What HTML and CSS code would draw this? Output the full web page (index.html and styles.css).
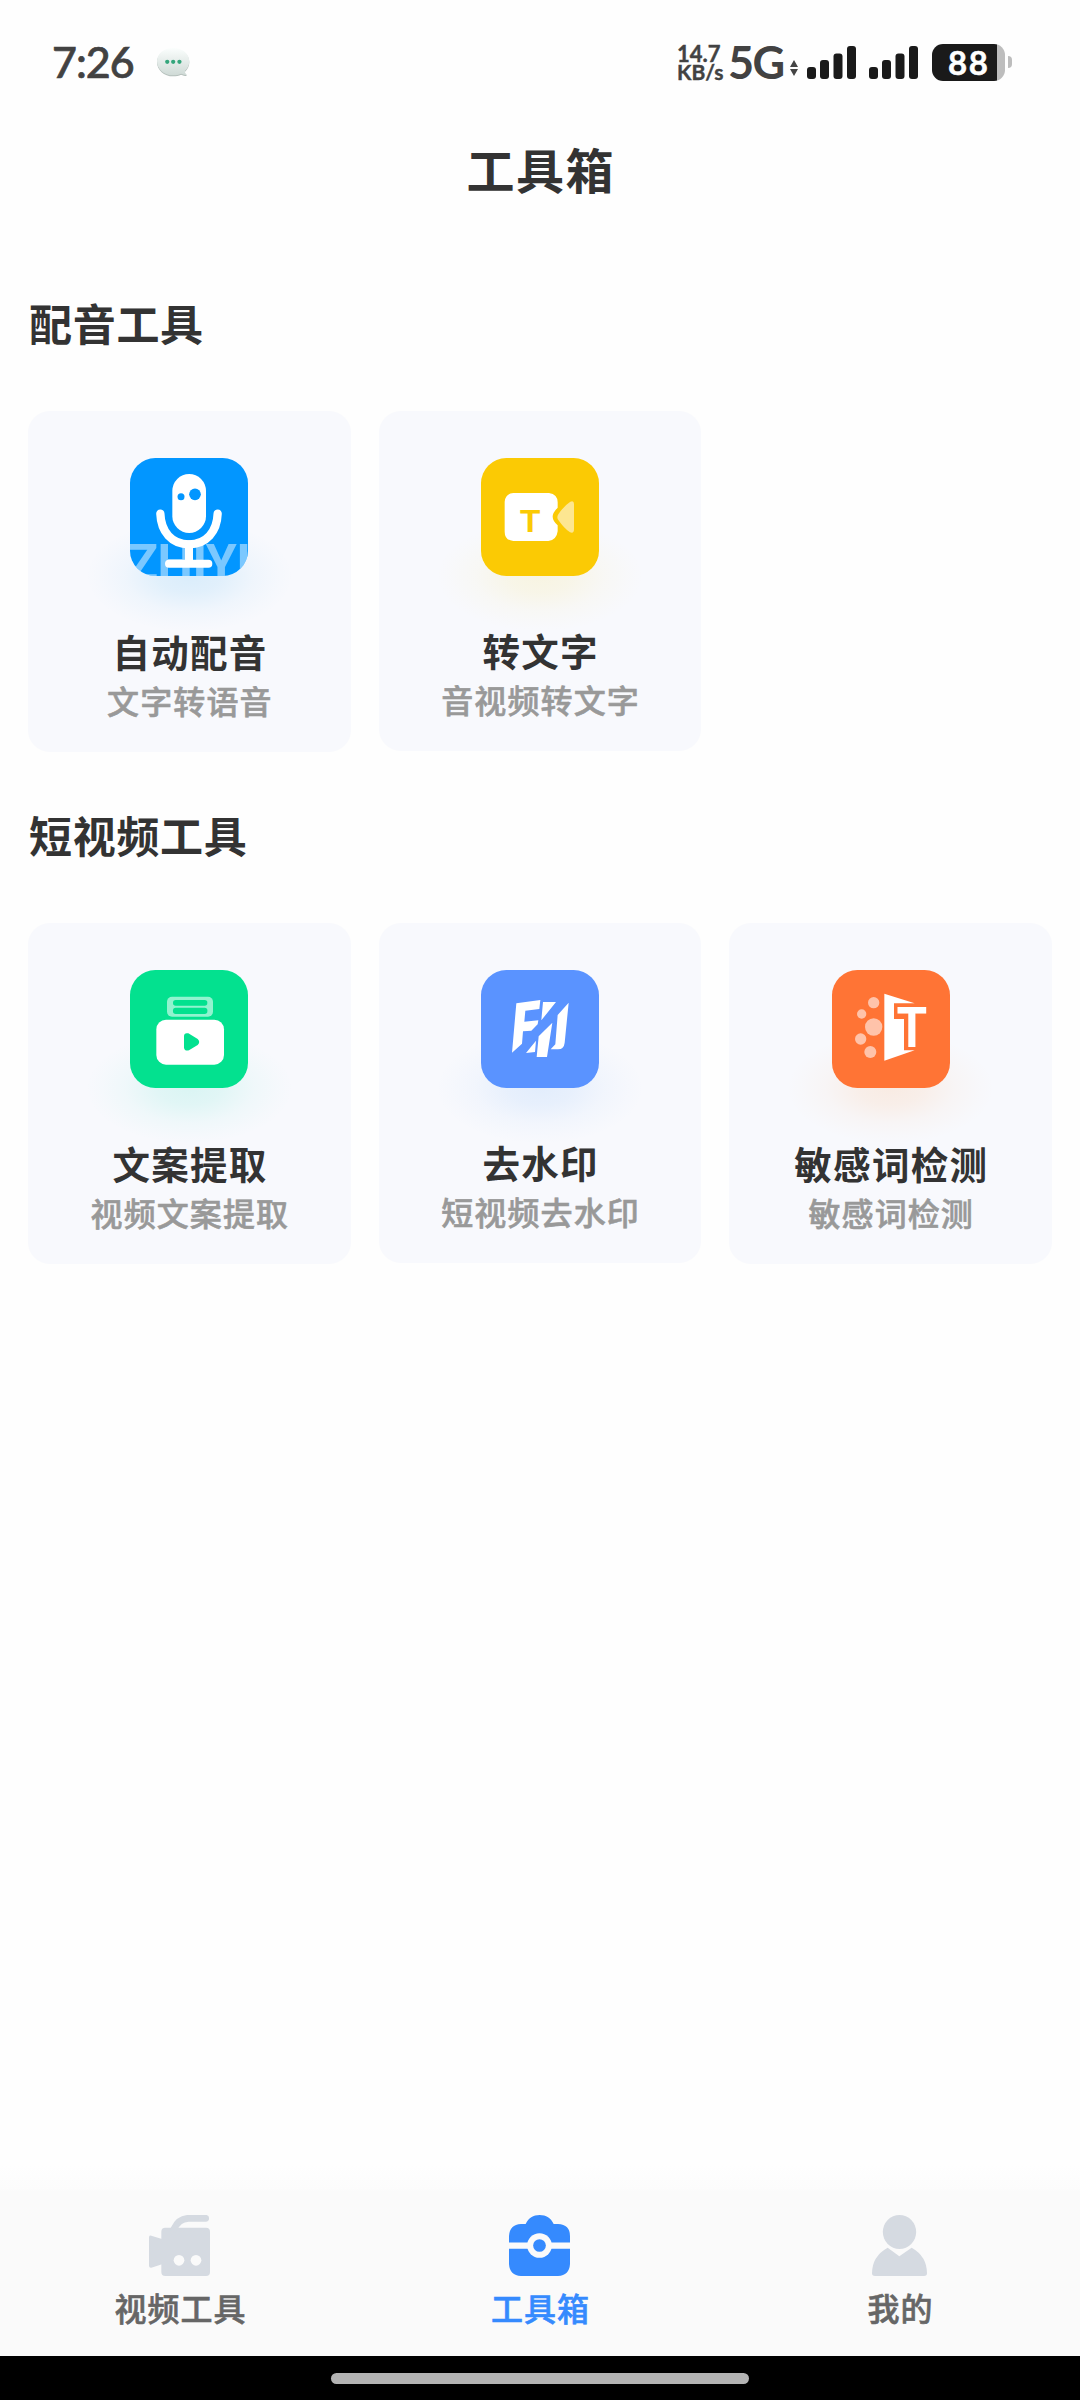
FILE: index.html
```html
<!DOCTYPE html>
<html lang="zh-CN">
<head>
<meta charset="utf-8">
<title>工具箱</title>
<link rel="stylesheet" href="styles.css">
</head>
<body>
<div class="screen">
  <header class="status">
    <span class="clock">7:26</span>
    <svg class="bubble" viewBox="468 80 104 94">
      <defs><linearGradient id="bub" x1="0" y1="0" x2="0" y2="1"><stop offset="0" stop-color="#fbfefd"/><stop offset="1" stop-color="#cfdad6"/></linearGradient></defs>
      <path d="M519 86c-28 0-49 17-49 40s21 43 49 43c9 0 17-2 24-5 5 3 11 4 18 4-5-4-7-8-6-13 8-8 13-18 13-29 0-23-21-40-49-40z" fill="#b4bfbb"/>
      <path d="M519 83c-28 0-49 17-49 40s21 43 49 43c9 0 17-2 24-5 5 3 11 4 18 4-5-4-7-8-6-13 8-8 13-18 13-29 0-23-21-40-49-40z" fill="url(#bub)"/>
      <g fill="#35a67c"><circle cx="501" cy="125" r="6.5"/><circle cx="519" cy="125" r="6.5"/><circle cx="538" cy="125" r="6.5"/></g>
    </svg>
    <span class="speed"><span class="rate">14.7</span><span class="unit">KB/s</span></span>
    <span class="net">5G</span>
    <svg class="updown" viewBox="0 0 8 16"><path d="M4 0l4 7H0zM4 16l4-7H0z" fill="#444"/></svg>
    <svg class="signal" viewBox="0 0 49 33"><g fill="#1a1a1a"><rect y="21" width="9" height="12" rx="3"/><rect x="13" y="14" width="9" height="19" rx="3"/><rect x="26.500" y="7.500" width="9" height="25.500" rx="3"/><rect x="40" width="9" height="33" rx="3"/></g></svg>
    <svg class="signal second" viewBox="0 0 49 33"><g fill="#1a1a1a"><rect y="21" width="9" height="12" rx="3"/><rect x="13" y="14" width="9" height="19" rx="3"/><rect x="26.500" y="7.500" width="9" height="25.500" rx="3"/><rect x="40" width="9" height="33" rx="3"/></g></svg>
    <span class="battery">88</span>
    <span class="nub"></span>
  </header>

  <h1 class="title">工具箱</h1>

  <main class="content">
    <h2 class="section">配音工具</h2>
    <div class="grid">
      <div class="card blue">
        <svg class="icon" viewBox="332 174 354 354">
          <defs><clipPath id="tile"><rect x="332" y="174" width="354" height="354" rx="76"/></clipPath></defs>
          <rect x="332" y="174" width="354" height="354" rx="76" fill="#0296ff"/>
          <g clip-path="url(#tile)"><text class="mark" x="325" y="540" textLength="370">ZHIYI</text></g>
          <rect x="459" y="222" width="101" height="177" rx="50.500" fill="#fff"/>
          <path d="M423 341c2 54 34 92 86 92s84-38 86-92" fill="none" stroke="#fff" stroke-width="25" stroke-linecap="round"/>
          <path d="M509 433v57M449 491h118" fill="none" stroke="#fff" stroke-width="24" stroke-linecap="round"/>
          <circle cx="485" cy="290" r="10.500" fill="#0296ff"/><circle cx="527" cy="283" r="17.500" fill="#0296ff"/>
        </svg>
        <h3 class="name">自动配音</h3>
        <p class="desc">文字转语音</p>
      </div>
      <div class="card yellow mid">
        <svg class="icon" viewBox="333 174 354 354">
          <rect x="333" y="174" width="354" height="354" rx="76" fill="#fbca04"/>
          <path d="M430 279h107q26 4 26 28v16q-15 15-15 27t15 26v18q-3 26-28 29H430q-26-2-26-28v-90q2-24 26-26z" fill="#fff"/>
          <path d="M565 343q17-26 36-38 11-5 11 7v76q0 14-12 9-17-11-35-37-6-8 0-17z" fill="#fde691"/>
          <text class="tee" x="450" y="395" textLength="61" lengthAdjust="spacingAndGlyphs">T</text>
        </svg>
        <h3 class="name">转文字</h3>
        <p class="desc">音视频转文字</p>
      </div>
    </div>

    <h2 class="section">短视频工具</h2>
    <div class="grid">
      <div class="card green">
        <svg class="icon" viewBox="332 510 354 354">
          <rect x="332" y="510" width="354" height="354" rx="76" fill="#03e18f"/>
          <rect x="443" y="590" width="138" height="60" rx="15" fill="#91f3cf"/>
          <rect x="461" y="600" width="103" height="17" rx="8" fill="#03e18f"/><rect x="461" y="623" width="103" height="19" rx="8" fill="#03e18f"/>
          <rect x="411" y="659" width="203" height="135" rx="29" fill="#fff"/>
          <path d="M494 709q0-12 13-9l28 17q9 9 0 18l-26 16q-13 3-15-8z" fill="#03e18f"/>
        </svg>
        <h3 class="name">文案提取</h3>
        <p class="desc">视频文案提取</p>
      </div>
      <div class="card indigo mid">
        <svg class="icon" viewBox="333 180 354 354">
          <rect x="333" y="180" width="354" height="354" rx="76" fill="#5a93ff"/>
          <g fill="#fff">
            <path d="M439 280l72-10-3 27-42 5-3 33 42-4-2 12-19 19-25 2-3 37-30 27z"/>
            <path d="M519 276h39l-44 55zM498 392l-3 34-27 3zM547 338l-16 103h-31l6-62zM596 278l-12 120q-2 19-20 20h-22l14-15 7-88z"/>
          </g>
        </svg>
        <h3 class="name">去水印</h3>
        <p class="desc">短视频去水印</p>
      </div>
      <div class="card orange">
        <svg class="icon" viewBox="335 180 354 354">
          <rect x="335" y="180" width="354" height="354" rx="76" fill="#ff7435"/>
          <g fill="#ffc3aa"><circle cx="460" cy="278" r="17"/><circle cx="424" cy="312" r="14"/><circle cx="460" cy="351" r="26"/><circle cx="421" cy="387" r="17"/><circle cx="450" cy="426" r="18"/></g>
          <path d="M492 251l91 29H521v47h30v94h32l-91 31z" fill="#fff"/>
          <text class="tee big" x="530" y="411" textLength="89" lengthAdjust="spacingAndGlyphs">T</text>
        </svg>
        <h3 class="name">敏感词检测</h3>
        <p class="desc">敏感词检测</p>
      </div>
    </div>
  </main>

  <nav class="tabs">
    <div class="tab">
      <svg class="tabicon" viewBox="207 165 183 183">
        <g fill="#d5dae1"><rect x="244" y="203" width="146" height="145" rx="12"/><path d="M207 231q1-5 7-4l32 10v76l-32 10q-6 1-7-5z"/></g>
        <path d="M282 207q14-31 43-32h52" fill="none" stroke="#d5dae1" stroke-width="20.500" stroke-linecap="round"/>
        <circle cx="297" cy="301" r="16" fill="#fafafa"/><circle cx="348" cy="301" r="16" fill="#fafafa"/>
      </svg>
      <span class="label">视频工具</span>
    </div>
    <div class="tab active">
      <svg class="tabicon" viewBox="207 165 183 183">
        <path d="M243 192h14c8-18 23-27 42-27s34 9 42 27h13q36 2 36 36v84q-2 34-36 36H243q-34-2-36-36v-84q2-34 36-36z" fill="#358afe"/>
        <path d="M207 257h183" stroke="#fafafa" stroke-width="19"/><circle cx="298.500" cy="256.500" r="37" fill="#fafafa"/><circle cx="298.500" cy="256.500" r="19" fill="#358afe"/>
      </svg>
      <span class="label">工具箱</span>
    </div>
    <div class="tab">
      <svg class="tabicon" viewBox="207 165 183 183">
        <ellipse cx="298.500" cy="216" rx="50" ry="51" fill="#d5dae1"/>
        <path d="M263 263l35 26 37-26q46 26 46 77 0 8-9 8H225q-9 0-9-8 0-51 47-77z" fill="#d5dae1"/>
      </svg>
      <span class="label">我的</span>
    </div>
  </nav>
  <footer class="gesture"><span class="pill"></span></footer>
</div>
</body>
</html>
```
FILE: styles.css
```css
* { box-sizing: border-box; }
body { margin: 0; background: #fefefe; }
h1, h2, h3, p { margin: 0; white-space: nowrap; }
.screen {
  width: 1080px;
  height: 2400px;
  display: flex;
  flex-direction: column;
  font-family: "Noto Sans CJK SC", sans-serif;
  color: #333;
  background: #fefefe;
}
.icon, .tabicon, .bubble, .signal, .updown { display: block; flex: none; }

.status {
  height: 124px;
  display: flex;
  align-items: center;
  padding: 0 0 0 52px;
  font-family: Lato, sans-serif;
  color: #424242;
}
.clock { width: 104px; font-size: 43px; line-height: 50px; font-weight: 500; letter-spacing: -1px; -webkit-text-stroke: 0.7px currentColor; }
.bubble { width: 35px; height: 31px; }
.speed { margin-left: 486px; width: 51px; display: flex; flex-direction: column; font-weight: 700; -webkit-text-stroke: 0.4px currentColor; }
.rate { font-size: 22px; line-height: 19px; }
.unit { font-size: 21px; line-height: 18px; }
.net { width: 62px; font-size: 45px; line-height: 50px; font-weight: 700; letter-spacing: -1.500px; }
.updown { width: 8px; height: 16px; margin-top: 12px; }
.signal { width: 49px; height: 33px; margin-left: 9px; }
.signal.second { margin-left: 13px; }
.battery {
  width: 73px;
  height: 37px;
  margin-left: 14px;
  padding-left: 16px;
  border-radius: 11px;
  background: linear-gradient(90deg, #1a1a1a 65px, #bdbdbd 65px);
  color: #fff;
  font-size: 33px;
  line-height: 37px;
  font-weight: 700;
  letter-spacing: 1.500px;
  -webkit-text-stroke: 0.5px currentColor;
}
.nub { width: 4px; height: 12px; margin-left: 3px; border-radius: 0 6px 6px 0; background: #bdbdbd; }

.title { height: 94px; font-size: 48px; line-height: 88px; font-weight: 700; text-align: center; letter-spacing: 1.500px; text-indent: 1.500px; }

.content { flex: 1; padding: 52px 28px 0; }
.section { height: 112px; font-size: 43px; line-height: 105px; font-weight: 700; letter-spacing: 0.700px; text-indent: 1px; margin-bottom: 29px; }
.grid { display: grid; grid-template-columns: repeat(3, 1fr); column-gap: 28px; margin-bottom: 30px; }
.card {
  --glow: 2, 150, 235;
  height: 341px;
  border-radius: 22px;
  display: flex;
  flex-direction: column;
  align-items: center;
  padding-top: 47px;
  background: radial-gradient(ellipse 104px 56px at 50% 165px, rgba(var(--glow), 0.12), rgba(var(--glow), 0.095) 30%, rgba(var(--glow), 0.035) 62%, rgba(var(--glow), 0.01) 85%, rgba(var(--glow), 0)) #f8f9fd;
}
.card.mid { height: 340px; }
.yellow { --glow: 245, 210, 30; }
.green { --glow: 3, 215, 175; }
.indigo { --glow: 70, 150, 245; }
.orange { --glow: 250, 135, 40; }
.icon { width: 118px; height: 118px; }
.mark { font-family: Roboto, sans-serif; font-weight: 700; font-size: 150px; fill: #fff; fill-opacity: 0.480; }
.tee { font-family: "Liberation Sans", sans-serif; font-weight: 700; font-size: 96px; fill: #fbca04; }
.tee.big { font-size: 170px; fill: #fff; }
.name { height: 56px; margin-top: 47px; font-size: 37.500px; line-height: 56px; font-weight: 700; letter-spacing: 1.300px; text-indent: 1.300px; }
.desc { height: 46px; margin-top: -2px; font-size: 32px; line-height: 46px; font-weight: 500; letter-spacing: 1.100px; text-indent: 1.100px; color: #999; -webkit-text-stroke: 0.6px currentColor; }
.mid .name { margin-top: 46px; }

.tabs {
  height: 191px;
  display: flex;
  padding-top: 50px;
  background: linear-gradient(#fefefe, #fcfcfc 24px, #fafafa 26px);
}
.tab { flex: 1; display: flex; flex-direction: column; align-items: center; color: #666; }
.tabicon { width: 61px; height: 61px; margin-right: 1px; }
.label { margin-top: 8px; font-size: 32px; line-height: 46px; font-weight: 500; letter-spacing: 1px; text-indent: 1px; -webkit-text-stroke: 0.6px currentColor; }
.active .label { color: #358afe; }
.gesture { height: 44px; background: #000; display: flex; align-items: center; justify-content: center; }
.pill { width: 418px; height: 11px; border-radius: 6px; background: #b3b3b3; }
```
